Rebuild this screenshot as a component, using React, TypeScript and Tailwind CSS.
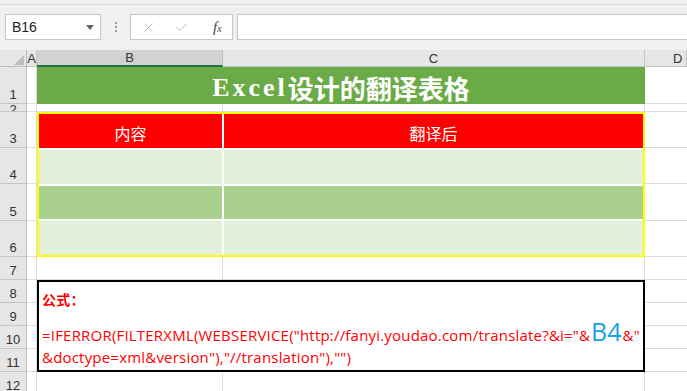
import { X, Check } from 'lucide-react';

const rowHead =
  'flex items-end justify-center overflow-hidden bg-[#e6e6e6] border-r border-b border-[#c4c4c4] text-[13px] leading-[16px] text-[#333]';
const colHead =
  'flex items-end justify-center overflow-hidden bg-[#e6e6e6] border-r border-b border-[#c4c4c4] text-[13px] leading-[14px] text-[#333]';
const cell = 'bg-white border-r border-b border-[#dcdcdc]';
const cellD = 'bg-white border-b border-[#dcdcdc]';

const RowHead = ({ n }: { n: number }) => <div className={rowHead}>{n}</div>;

const App = () => {
  return (
    <div className="w-[687px] h-[391px] overflow-hidden bg-[#f0f0f0] font-['Liberation_Sans',Arial,sans-serif]">
      {/* formula bar */}
      <div className="h-[50px] pt-[4px]">
        <div className="h-full border-t border-[#dadada] flex items-start pt-[9px] pl-[5px] overflow-hidden">
          <div className="w-[96px] h-[26px] shrink-0 bg-white border border-[#c6c6c6] flex items-center justify-between pl-[6px] pr-[6px] text-[14px] text-[#222]">
            <span>B16</span>
            <svg width="8" height="5" viewBox="0 0 8 5">
              <path d="M0 0h8L4 5z" fill="#666" />
            </svg>
          </div>
          <div className="w-[29px] h-[26px] shrink-0 flex flex-col items-center justify-center gap-[2px]">
            <span className="w-[2px] h-[2px] bg-[#9a9a9a]" />
            <span className="w-[2px] h-[2px] bg-[#9a9a9a]" />
            <span className="w-[2px] h-[2px] bg-[#9a9a9a]" />
          </div>
          <div className="w-[103px] h-[26px] shrink-0 bg-white border border-[#c6c6c6] flex items-center pl-[10px]">
            <X size={15} strokeWidth={1.4} color="#b5b5b5" />
            <Check size={15} strokeWidth={1.4} color="#b5b5b5" className="ml-[18px]" />
            <span className="ml-[24px] font-['Liberation_Serif',serif] italic text-[15px] text-[#444] leading-none">
              f<span className="text-[10px]">x</span>
            </span>
          </div>
          <div className="ml-[4px] w-[470px] h-[26px] shrink-0 bg-white border border-[#c6c6c6]" />
        </div>
      </div>

      {/* sheet */}
      <div className="grid grid-cols-[27px_10px_186px_422px_42px] grid-rows-[17px_37px_8px_36px_36px_37px_36px_23px_23px_23px_23px_23px_23px]">
        {/* column headers */}
        <div className="bg-[#e6e6e6] border-r border-b border-[#bdbdbd] flex items-end justify-end pr-[2px] pb-[1px]">
          <svg width="10" height="10" viewBox="0 0 10 10">
            <path d="M10 0V10H0z" fill="#bdbdbd" />
          </svg>
        </div>
        <div className={colHead}>A</div>
        <div className="flex items-end justify-center bg-[#d2d2d2] border-r border-[#bdbdbd] border-b-2 border-b-[#217346] text-[13px] leading-[14px] text-[#333]">
          B
        </div>
        <div className={colHead}>C</div>
        <div className={colHead + ' !justify-start pl-[28px]'}>D</div>

        {/* row 1 */}
        <RowHead n={1} />
        <div className={cell} />
        <div className="col-span-2 bg-[#6bab47] flex items-end justify-center pb-[3px] text-white font-bold leading-[26px] text-[26px]">
          <span className="font-['Liberation_Serif',serif] tracking-[3px] text-[26px]">Excel</span>
          <span className="font-['Noto_Sans_CJK_SC',sans-serif] text-[26px]">设计的翻译表格</span>
        </div>
        <div className={cellD} />

        {/* row 2 */}
        <div className="flex items-start justify-center overflow-hidden bg-[#e6e6e6] border-r border-b border-[#c4c4c4] text-[13px] leading-[12px] text-[#333]">
          2
        </div>
        <div className={cell} />
        <div className={cell} />
        <div className={cell} />
        <div className={cellD} />

        {/* row 3 : table 3-6 */}
        <RowHead n={3} />
        <div className={cell} />
        <div className="col-span-2 row-span-4 border-2 border-[#ffff00] bg-white grid grid-cols-[183px_1fr] grid-rows-4 gap-[2px] font-['Noto_Sans_CJK_SC',sans-serif] text-white text-[16px]">
          <div className="bg-[#ff0000] flex items-center justify-center pt-[4px]">内容</div>
          <div className="bg-[#ff0000] flex items-center justify-center pt-[4px]">翻译后</div>
          <div className="bg-[#e2efda]" />
          <div className="bg-[#e2efda]" />
          <div className="bg-[#a9d08e]" />
          <div className="bg-[#a9d08e]" />
          <div className="bg-[#e2efda]" />
          <div className="bg-[#e2efda]" />
        </div>
        <div className={cellD} />

        <RowHead n={4} />
        <div className={cell} />
        <div className={cellD} />

        <RowHead n={5} />
        <div className={cell} />
        <div className={cellD} />

        <RowHead n={6} />
        <div className={cell} />
        <div className={cellD} />

        {/* row 7 */}
        <RowHead n={7} />
        <div className={cell} />
        <div className={cell} />
        <div className={cell} />
        <div className={cellD} />

        {/* row 8 : formula box 8-11 */}
        <RowHead n={8} />
        <div className={cell} />
        <div className="col-span-2 row-span-4 border-2 border-black bg-white pl-[3px] text-[#ff0000] font-['Open_Sans','Noto_Sans_CJK_SC',sans-serif] text-[15px] tracking-[0.2px] whitespace-nowrap">
          <div className="mt-[8px] leading-[18px] text-[14px] font-bold font-['Noto_Sans_CJK_SC',sans-serif]">公式：</div>
          <div className="mt-[11px] leading-[22px]">
            =IFERROR(FILTERXML(WEBSERVICE("http://fanyi.youdao.com/translate?&amp;i="&amp;
            <span className="text-[25px] leading-none tracking-normal text-[#1ba1e2] mx-[1px]">B4</span>
            &amp;"
          </div>
          <div className="leading-[22px]">&amp;doctype=xml&amp;version"),"//translation"),"")</div>
        </div>
        <div className={cellD} />

        <RowHead n={9} />
        <div className={cell} />
        <div className={cellD} />

        <RowHead n={10} />
        <div className={cell} />
        <div className={cellD} />

        <RowHead n={11} />
        <div className={cell} />
        <div className={cellD} />

        {/* row 12 */}
        <RowHead n={12} />
        <div className={cell} />
        <div className={cell} />
        <div className={cell} />
        <div className={cellD} />
      </div>
    </div>
  );
};

export default App;
